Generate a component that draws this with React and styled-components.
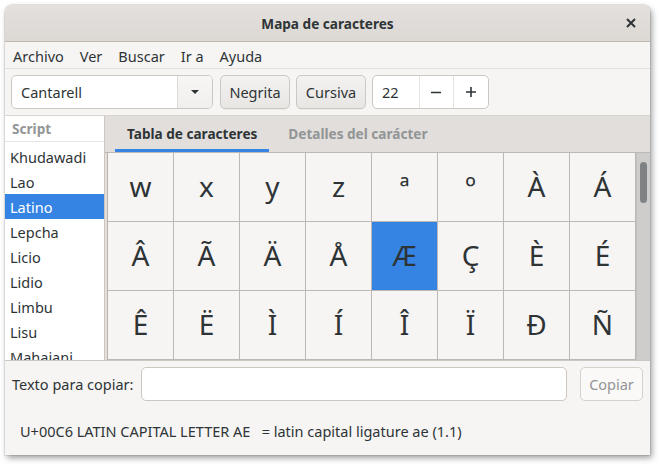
import React from "react";
import styled, { createGlobalStyle } from "styled-components";

const Global = createGlobalStyle`
  html, body { margin: 0; padding: 0; background: #ffffff; }
  body { font-family: "Noto Sans", "Open Sans", sans-serif; font-size: 14.5px; color: #2e3436; }
  * { box-sizing: border-box; }
`;

const Page = styled.div`
  width: 659px;
  height: 464px;
  padding: 5px 9px 9px 5px;
`;

const Window = styled.div`
  width: 645px;
  height: 450px;
  display: flex;
  flex-direction: column;
  background: #f6f5f4;
  border-radius: 7px 7px 0 0;
  box-shadow: 2px 3px 6px rgba(0, 0, 0, 0.38), 0 0 0 1px rgba(0, 0, 0, 0.08);
  overflow: hidden;
`;

const TitleBar = styled.div`
  height: 37px;
  flex: none;
  display: flex;
  align-items: center;
  justify-content: center;
  position: relative;
  background: linear-gradient(#e3e0dd, #dcd8d4);
  border-bottom: 1px solid #bfb8b1;
  font-weight: 700;
  font-size: 13.6px;
`;

const CloseButton = styled.div`
  position: absolute;
  right: 14px;
  top: 13px;
  width: 10px;
  height: 10px;
  display: flex;
`;

const MenuBar = styled.div`
  height: 27px;
  flex: none;
  display: flex;
  align-items: center;
  border-bottom: 1px solid #e2dfdc;
`;

const MenuItem = styled.span`
  padding: 0 8px;
  line-height: 26px;
  padding-top: 1px;
`;

const ToolBar = styled.div`
  flex: none;
  display: flex;
  align-items: center;
  padding: 6px 6px;
  gap: 6px;
`;

const Combo = styled.div`
  width: 202px;
  height: 34px;
  display: flex;
  border: 1px solid #cdc7c2;
  border-radius: 5px;
  background: #ffffff;
  overflow: hidden;
  margin-right: 1px;
`;

const ComboText = styled.div`
  flex: 1;
  padding-left: 9px;
  display: flex;
  align-items: center;
`;

const ComboButton = styled.div`
  width: 35px;
  border-left: 1px solid #dedad6;
  background: linear-gradient(#f7f6f5, #f1efee);
  display: flex;
  align-items: center;
  justify-content: center;
`;

const Button = styled.div`
  width: ${(p) => p.$w}px;
  height: 34px;
  display: flex;
  align-items: center;
  justify-content: center;
  border: 1px solid #cdc7c2;
  border-radius: 5px;
  background: ${(p) => (p.$disabled ? "#faf9f8" : "linear-gradient(#f4f2f1, #e8e6e3)")};
  color: ${(p) => (p.$disabled ? "#929595" : "#2e3436")};
  border-color: ${(p) => (p.$disabled ? "#d5d0cc" : "#cdc7c2")};
  box-shadow: ${(p) => (p.$disabled ? "none" : "0 1px 0 rgba(0,0,0,0.04)")};
`;

const Spin = styled.div`
  width: 117px;
  height: 34px;
  display: flex;
  border: 1px solid #cdc7c2;
  border-radius: 5px;
  background: #ffffff;
  overflow: hidden;
`;

const SpinValue = styled.div`
  width: 46px;
  padding-left: 9px;
  display: flex;
  align-items: center;
`;

const SpinButton = styled.div`
  width: 35px;
  border-left: 1px solid #e6e3e0;
  display: flex;
  align-items: center;
  justify-content: center;
`;

const Main = styled.div`
  height: 246px;
  flex: none;
  display: flex;
  border-top: 1px solid #d8d4d0;
  border-bottom: 1px solid #cdc7c2;
`;

const Sidebar = styled.div`
  width: 100px;
  flex: none;
  background: #ffffff;
  border-right: 1px solid #cdc7c2;
  overflow: hidden;
`;

const SideHeader = styled.div`
  height: 26px;
  padding-left: 7px;
  display: flex;
  align-items: center;
  color: #929595;
  font-weight: 700;
  font-size: 13.6px;
  border-bottom: 1px solid #e7e4e1;
  margin-bottom: 2px;
`;

const SideRow = styled.div`
  height: 25px;
  padding-left: 5px;
  display: flex;
  align-items: center;
  background: ${(p) => (p.$selected ? "#3584e4" : "transparent")};
  color: ${(p) => (p.$selected ? "#ffffff" : "#2e3436")};
`;

const Notebook = styled.div`
  flex: 1;
  display: flex;
  flex-direction: column;
  background: #e1dedb;
  min-width: 0;
`;

const TabStrip = styled.div`
  height: 36px;
  flex: none;
  display: flex;
  gap: 7px;
  padding-left: 10px;
`;

const Tab = styled.div`
  padding: 2px 12px 0;
  display: flex;
  align-items: center;
  font-weight: 700;
  font-size: 13.6px;
  color: ${(p) => (p.$active ? "#2e3436" : "#929595")};
  border-bottom: 3px solid ${(p) => (p.$active ? "#3584e4" : "transparent")};
`;

const Body = styled.div`
  flex: 1;
  display: flex;
  padding-left: 2px;
  border-top: 1px solid #bdb8b3;
  overflow: hidden;
`;

const CharGrid = styled.div`
  display: grid;
  grid-template-columns: repeat(8, 66px);
  grid-auto-rows: 69px;
  border-left: 1px solid #b8b3ae;
  background: #f6f5f4;
  align-content: start;
`;

const Cell = styled.div`
  display: flex;
  align-items: center;
  justify-content: center;
  border-right: 1px solid #bcb8b4;
  border-bottom: 1px solid #bcb8b4;
  background: ${(p) => (p.$selected ? "#3584e4" : "#f6f5f4")};
  font-size: 28px;
  color: #2e3436;
  padding-bottom: 2px;
`;

const Scrollbar = styled.div`
  flex: 1;
  background: #cecdcc;
  border-left: 1px solid #c3c0bd;
  position: relative;
`;

const Thumb = styled.div`
  position: absolute;
  left: 3px;
  top: 9px;
  width: 7px;
  height: 41px;
  border-radius: 4px;
  background: #7f8384;
`;

const Footer = styled.div`
  flex: 1;
  display: flex;
  flex-direction: column;
`;

const CopyRow = styled.div`
  display: flex;
  align-items: center;
  padding: 6px 7px 0 7px;
`;

const Label = styled.span`
  width: 129px;
  flex: none;
`;

const Entry = styled.div`
  flex: 1;
  height: 34px;
  background: #ffffff;
  border: 1px solid #cdc7c2;
  border-radius: 5px;
  margin-right: 13px;
`;

const Status = styled.div`
  padding: 19px 0 0 15px;
  white-space: pre;
  line-height: 22px;
`;

const chars = [
  "w", "x", "y", "z", "ª", "º", "À", "Á",
  "Â", "Ã", "Ä", "Å", "Æ", "Ç", "È", "É",
  "Ê", "Ë", "Ì", "Í", "Î", "Ï", "Ð", "Ñ",
];

const scripts = ["Khudawadi", "Lao", "Latino", "Lepcha", "Licio", "Lidio", "Limbu", "Lisu", "Mahajani"];

export default function App() {
  return (
    <>
      <Global />
      <Page>
        <Window>
          <TitleBar>
            Mapa de caracteres
            <CloseButton>
              <svg width="10" height="10" viewBox="0 0 10 10">
                <path d="M1 1 L9 9 M9 1 L1 9" stroke="#2e3436" strokeWidth="2" strokeLinecap="butt" />
              </svg>
            </CloseButton>
          </TitleBar>
          <MenuBar>
            <MenuItem>Archivo</MenuItem>
            <MenuItem>Ver</MenuItem>
            <MenuItem>Buscar</MenuItem>
            <MenuItem>Ir a</MenuItem>
            <MenuItem>Ayuda</MenuItem>
          </MenuBar>
          <ToolBar>
            <Combo>
              <ComboText>Cantarell</ComboText>
              <ComboButton>
                <svg width="10" height="6" viewBox="0 0 10 6">
                  <path d="M1 1 L9 1 L5 5 Z" fill="#2e3436" />
                </svg>
              </ComboButton>
            </Combo>
            <Button $w={70}>Negrita</Button>
            <Button $w={70}>Cursiva</Button>
            <Spin>
              <SpinValue>22</SpinValue>
              <SpinButton>
                <svg width="12" height="12" viewBox="0 0 12 12">
                  <path d="M1 6.5 H11" stroke="#2e3436" strokeWidth="1.6" />
                </svg>
              </SpinButton>
              <SpinButton>
                <svg width="12" height="12" viewBox="0 0 12 12">
                  <path d="M1 6 H11 M6 1 V11" stroke="#2e3436" strokeWidth="1.6" />
                </svg>
              </SpinButton>
            </Spin>
          </ToolBar>
          <Main>
            <Sidebar>
              <SideHeader>Script</SideHeader>
              {scripts.map((s) => (
                <SideRow key={s} $selected={s === "Latino"}>
                  {s}
                </SideRow>
              ))}
            </Sidebar>
            <Notebook>
              <TabStrip>
                <Tab $active>Tabla de caracteres</Tab>
                <Tab>Detalles del carácter</Tab>
              </TabStrip>
              <Body>
                <CharGrid>
                  {chars.map((c, i) => (
                    <Cell key={i} $selected={c === "Æ"}>
                      {c}
                    </Cell>
                  ))}
                </CharGrid>
                <Scrollbar>
                  <Thumb />
                </Scrollbar>
              </Body>
            </Notebook>
          </Main>
          <Footer>
            <CopyRow>
              <Label>Texto para copiar:</Label>
              <Entry />
              <Button $w={63} $disabled>
                Copiar
              </Button>
            </CopyRow>
            <Status>U+00C6 LATIN CAPITAL LETTER AE   = latin capital ligature ae (1.1)</Status>
          </Footer>
        </Window>
      </Page>
    </>
  );
}
